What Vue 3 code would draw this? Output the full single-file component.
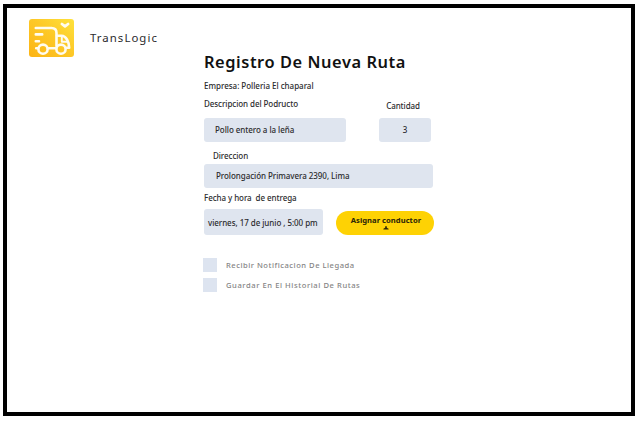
<script setup>
import { ref } from 'vue'

const options = ref([
  { id: 'arrival', label: 'Recibir Notificacion De Llegada', checked: false },
  { id: 'history', label: 'Guardar En El Historial De Rutas', checked: false },
])
</script>

<template>
  <div class="page">
    <div class="frame">
      <header class="brand">
        <svg class="logo" viewBox="0 0 45 38" aria-hidden="true">
          <defs>
            <linearGradient id="gold" x1="0" y1="1" x2="1" y2="0">
              <stop offset="0" stop-color="#fcb414" />
              <stop offset="0.55" stop-color="#fdc928" />
              <stop offset="1" stop-color="#fee23c" />
            </linearGradient>
          </defs>
          <rect width="45" height="38" rx="3" fill="url(#gold)" />
          <g fill="none" stroke="#fffcf0" stroke-width="2.6" stroke-linecap="round" stroke-linejoin="round">
            <path d="M6.8 9H22.5Q27.5 9 27.5 14V27" />
            <path d="M6.8 15.4H13.2M6.8 22.3H10M7.2 29.2H9M19 29.2H27" />
            <path d="M28 16.8H32.5Q36 17 38 20.5Q40.2 24.5 40.2 28.8H37.5" />
            <path d="M32.8 17.5V22.7H38.5" stroke-width="1.9" />
            <circle cx="14" cy="30.2" r="4.6" />
            <circle cx="32" cy="30.2" r="4.6" />
            <path d="M32.9 5L36 7.4L39.1 5" stroke-width="2.8" />
          </g>
        </svg>
        <span class="brand-name">TransLogic</span>
      </header>

      <main class="form">
        <h1 class="title"><span>Registro De Nueva Ruta</span></h1>
        <p class="company"><span>Empresa: Polleria El chaparal</span></p>

        <div class="row labels">
          <span class="label product-label">Descripcion del Podructo</span>
          <span class="label amount-label">Cantidad</span>
        </div>
        <div class="row">
          <div class="field product"><span>Pollo entero a la leña</span></div>
          <div class="field amount"><span>3</span></div>
        </div>

        <div class="label address-label"><span>Direccion</span></div>
        <div class="field address"><span>Prolongación Primavera 2390, Lima</span></div>

        <div class="label date-label"><span>Fecha y hora&nbsp; de entrega</span></div>
        <div class="row">
          <div class="field date"><span>viernes, 17 de junio , 5:00 pm</span></div>
          <button class="assign" type="button">
            <span>Asignar conductor</span>
            <svg class="person" viewBox="0 0 6 4" aria-hidden="true">
              <path d="M2.2 0.2H3.8V1.8L5.6 2.8V3.6H0.4V2.8L2.2 1.8Z" />
            </svg>
          </button>
        </div>

        <div class="options">
          <div v-for="o in options" :key="o.id" class="option" :class="o.id" @click="o.checked = !o.checked">
            <span class="box"></span>
            <span class="option-label">{{ o.label }}</span>
          </div>
        </div>
      </main>
    </div>
  </div>
</template>

<style>
body {
  background: #fff;
}
</style>

<style scoped>
.page {
  box-sizing: border-box;
  width: 639px;
  height: 422px;
  padding: 4px 4px 6px 3px;
  background: #fff;
  font-family: "Noto Sans", sans-serif;
  font-size: 8px;
  font-weight: 500;
  line-height: 12px;
  color: #2b2b2d;
  white-space: nowrap;
}
.frame {
  box-sizing: border-box;
  height: 412px;
  border: 4px solid #000;
  overflow: hidden;
}
.brand {
  display: flex;
  height: 38px;
  padding: 11px 0 0 21.5px;
}
.logo {
  width: 45px;
  height: 38px;
}
.brand-name {
  margin: 12px 0 0 16.5px;
  font-size: 11.4px;
  font-weight: 400;
  line-height: 14px;
  letter-spacing: 1.05px;
}
.form {
  width: 230px;
  margin-left: 197px;
}
.title {
  margin: -6px 0 0;
  font-size: 16.4px;
  font-weight: 600;
  line-height: 22px;
  letter-spacing: 0.56px;
  color: #111;
}
.company {
  margin: 7px 0 0;
  letter-spacing: -0.02px;
}
.row {
  display: flex;
}
.labels {
  height: 20px;
  margin-top: 6px;
}
.label {
  letter-spacing: -0.07px;
}
.amount-label {
  margin: 2px 0 0 auto;
  padding-right: 14px;
}
.field {
  display: flex;
  align-items: center;
  box-sizing: border-box;
  height: 24px;
  border-radius: 3px;
  background: #dfe5ef;
  letter-spacing: -0.05px;
}
.product {
  width: 142px;
  padding-left: 11px;
}
.amount {
  width: 52px;
  margin-left: 33px;
  justify-content: center;
}
.address-label {
  margin-top: 8px;
  padding-left: 9px;
}
.address {
  width: 229px;
  margin-top: 2px;
  padding-left: 12px;
}
.date-label {
  margin: 4px 0 5px;
}
.date {
  width: 119px;
  height: 26px;
  padding: 2px 0 0 4px;
}
.assign {
  display: flex;
  flex-direction: column;
  align-items: center;
  width: 98px;
  height: 24px;
  margin: 2px 0 0 13px;
  padding: 3px 0 0 2px;
  border: 0;
  border-radius: 12px;
  background: #fed204;
  color: #2c2508;
  font: 700 7.6px/12px "Noto Sans", sans-serif;
  letter-spacing: 0.04px;
}
.person {
  width: 6px;
  height: 4px;
  fill: #2c2508;
}
.options {
  margin: 23px 0 0 -1px;
}
.option {
  display: flex;
  align-items: center;
  height: 14px;
  margin-bottom: 6px;
}
.box {
  width: 14px;
  height: 14px;
  background: #dde4f0;
}
.option-label {
  margin-left: 9px;
  font-size: 7.6px;
  color: #858585;
  letter-spacing: 0.57px;
}
.arrival .option-label {
  letter-spacing: 0.51px;
}
</style>
